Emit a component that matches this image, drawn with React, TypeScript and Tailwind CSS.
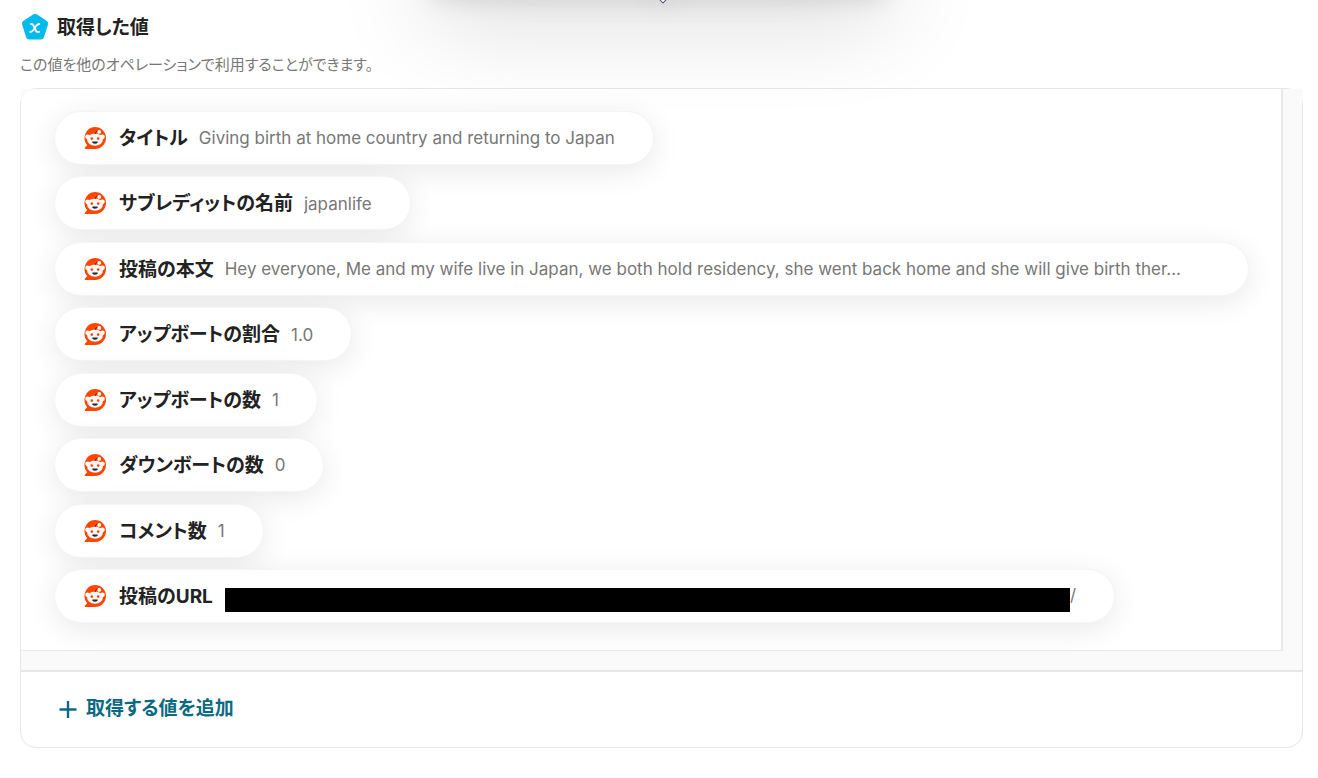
const rows = [
  { label: 'タイトル', value: 'Giving birth at home country and returning to Japan' },
  { label: 'サブレディットの名前', value: 'japanlife' },
  {
    label: '投稿の本文',
    value:
      'Hey everyone, Me and my wife live in Japan, we both hold residency, she went back home and she will give birth ther...',
    wide: true,
  },
  { label: 'アップボートの割合', value: '1.0' },
  { label: 'アップボートの数', value: '1' },
  { label: 'ダウンボートの数', value: '0' },
  { label: 'コメント数', value: '1' },
  { label: '投稿のURL', value: '/', redacted: true },
];

function RedditIcon() {
  return (
    <svg viewBox="0 0 24 24" className="size-6 shrink-0" aria-hidden="true">
      <path
        d="M12 1a11 11 0 1 1 0 22H2.6c-.9 0-1.2-1-.6-1.6l2.2-2.2A11 11 0 0 1 12 1z"
        fill="#ff4500"
      />
      <circle cx="4.600" cy="10.800" r="2.400" fill="#fff" />
      <circle cx="19.400" cy="10.800" r="2.400" fill="#fff" />
      <ellipse cx="12" cy="13.600" rx="7.900" ry="6.200" fill="#f3f6f8" />
      <path d="M12.2 8c.2-1.8 1.200-2.800 3-2.900" fill="none" stroke="#5a2010" strokeWidth="0.9" />
      <circle cx="16.200" cy="5.900" r="1.900" fill="#fff" />
      <ellipse cx="8.800" cy="12.600" rx="1.300" ry="1.400" fill="#ff4500" />
      <ellipse cx="15.200" cy="12.600" rx="1.300" ry="1.400" fill="#ff4500" />
      <path d="M9 15.800c2-.4 4-.4 6 0-.5 2.500-5.500 2.500-6 0z" fill="#1c2830" />
    </svg>
  );
}

function VariableIcon() {
  return (
    <svg viewBox="0 0 28 28" className="size-7 shrink-0" aria-hidden="true">
      <path
        d="M12.4 1.2a3 3 0 0 1 3.3 0l10.2 6.9a3 3 0 0 1 1.1 3.4l-4.1 12.9a3 3 0 0 1-2.9 2.1H8.1a3 3 0 0 1-2.9-2.1L1.1 11.5a3 3 0 0 1 1.1-3.4z"
        fill="#03baec"
      />
      <path
        d="M10 11h.5c1 0 1.5.5 1.9 1.3l2.4 5.2c.4.9.9 1.4 1.8 1.4h1.4M18.3 11c-1.9 0-2.9 1.2-4.3 3.5-1.5 2.5-2.7 4.4-4.6 4.400"
        fill="none"
        stroke="#fff"
        strokeWidth="1.9"
        strokeLinecap="round"
      />
    </svg>
  );
}

export default function App() {
  return (
    <main className="relative overflow-hidden bg-white pt-[13px] pr-[15px] pb-8 pl-5 font-['Inter','Noto_Sans_CJK_JP',sans-serif] text-[#222] [font-feature-settings:'palt']">
      <div className="pointer-events-none absolute inset-x-0 top-0 flex justify-center" aria-hidden="true">
        <div className="-mt-16 h-14 w-[460px] rounded-xl shadow-[0_8px_24px_rgba(0,0,0,0.12),0_20px_100px_rgba(0,0,0,0.2)]" />
        <div className="absolute -top-1.5 left-1/2 size-2 rotate-45 border border-gray-600 bg-white shadow-[0_0_32px_rgba(0,0,0,0.25)]" />
      </div>

      <header>
        <h1 className="flex h-7 items-center gap-2 pl-px text-[19px] font-bold">
          <VariableIcon />
          <span className="pt-0.5">取得した値</span>
        </h1>
        <p className="mt-3 text-[15px] leading-6 text-[#777]">
          この値を他のオペレーションで利用することができます。
        </p>
      </header>

      <section className="mt-[11px] rounded-2xl border border-[#e6e6e6]">
        <div className="border-b-2 border-[#e6e6e6] bg-[#fafafa] pr-[19px] pb-[19px]">
          <ul className="flex min-h-[562px] flex-col items-start justify-between gap-[11px] rounded-tl-2xl border-r-2 border-b border-[#e9e9e9] bg-white pt-[22px] pr-8 pb-[27px] pl-[33px]">
            {rows.map((row) => (
              <li
                key={row.label}
                className={
                  (row.wide ? 'w-full ' : 'max-w-full ') +
                  'flex h-[54px] items-center rounded-full border border-[#f5f5f5] bg-white pr-[38px] pl-7 shadow-[0_6px_30px_rgba(0,0,0,0.09)]'
                }
              >
                <RedditIcon />
                <span className="ml-3 shrink-0 pt-0.5 text-[19px] leading-7 font-bold">{row.label}</span>
                {row.redacted && <span className="mt-2 ml-3 h-6 w-[845px] min-w-0 shrink bg-black" />}
                <span
                  className={
                    row.redacted ? 'text-[17px] text-[#777]' : 'ml-[11px] truncate pt-0.5 text-[17px] text-[#777]'
                  }
                >
                  {row.value}
                </span>
              </li>
            ))}
          </ul>
        </div>
        <div className="flex h-[75px] items-center pl-[37px]">
          <button type="button" className="flex cursor-pointer items-center gap-2 text-[19px] font-bold text-[#0b6a82]">
            <svg viewBox="0 0 20 20" className="size-5" aria-hidden="true">
              <path d="M10 1v17M1.500 9.500h17" fill="none" stroke="currentColor" strokeWidth="2.400" />
            </svg>
            取得する値を追加
          </button>
        </div>
      </section>
    </main>
  );
}
